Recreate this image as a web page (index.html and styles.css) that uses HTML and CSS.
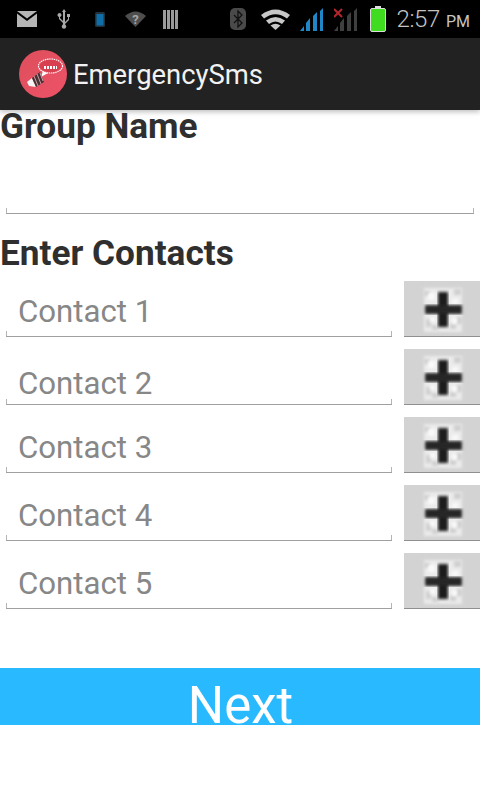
FILE: index.html
```html
<!DOCTYPE html>
<html lang="en">
<head>
    <meta charset="UTF-8">
    <meta name="viewport" content="width=device-width, initial-scale=1.0">
    <title>EmergencySms</title>
    <link rel="stylesheet" href="styles.css">
</head>
<body>
    <svg class="defs" width="0" height="0">
        <defs>
            <filter id="soft"><feGaussianBlur stdDeviation="1.500"/></filter>
            <symbol id="plus" viewBox="0 0 76 56">
                <rect x="20" y="7" width="38" height="44" fill="#ebebeb" filter="url(#soft)"/>
                <path d="M20 10h6v5h-6zM50 8h7v6h-7zM22 38h5v8h-5zM52 36h6v7h-6zM28 44h6v5h-6zM46 42h6v6h-6z" fill="#cfcfcf" filter="url(#soft)"/>
                <path d="M24 12h7v7h-7zM48 18h6v5h-6zM26 36h5v5h-5zM48 37h5v6h-5z" fill="#fafafa" filter="url(#soft)"/>
                <rect x="34" y="11" width="10" height="35" fill="#1a1a1a" filter="url(#soft)"/>
                <rect x="21" y="24" width="37" height="9" fill="#262626" filter="url(#soft)"/>
            </symbol>
        </defs>
    </svg>

    <div class="status-bar">
        <div class="status-left">
            <svg class="ic" width="20" height="16" viewBox="0 0 20 16"><path d="M0 0h20L10 7.500z" fill="#b5b5b5"/><path d="M0 2.500l10 7.500 10-7.500V16H0z" fill="#b5b5b5"/></svg>
            <svg class="ic ic-usb" width="14" height="20" viewBox="0 0 14 20"><path d="M7 0l2 3H8v10l3-3V8H10V5h3v3h-1v3l-4 4v2H6v-3L2 10V8a2 2 0 1 1 1 0v1l3 3V3H5z" fill="#a8a8a8"/><circle cx="7" cy="17.500" r="2.200" fill="#a8a8a8"/></svg>
            <svg class="ic ic-phone" width="10" height="15" viewBox="0 0 10 15"><rect width="10" height="15" rx="1.500" fill="#23303a"/><rect x="1.500" y="2" width="7" height="11.500" fill="#0f6ea8"/></svg>
            <svg class="ic ic-nowifi" width="21" height="16" viewBox="0 0 21 16"><path d="M0 5q10.500-9 21 0L10.500 16z" fill="#4e4e4e"/><text x="10.500" y="13" class="q">?</text></svg>
            <svg class="ic ic-sim" width="15" height="19" viewBox="0 0 15 19"><path d="M0 0h3v19H0zM4 0h3v19H4zM8 0h3v19H8zM12 0h3v19h-3z" fill="#9a9a9a"/></svg>
        </div>
        <div class="status-right">
            <svg class="ic" width="16" height="22" viewBox="0 0 16 22"><rect width="16" height="22" rx="5" fill="#4a4a4a"/><path d="M4 7l8 8-4 4V3l4 4-8 8" fill="none" stroke="#111" stroke-width="1.300"/></svg>
            <svg class="ic ic-wifi" width="29" height="21" viewBox="0 0 29 21"><path d="M0 6Q14.500-5 29 6l-3 3.500Q14.500 1 3 9.500z" fill="#c8c8c8"/><path d="M5 11.500q9.500-7 19 0L21 15q-6.500-5-13 0z" fill="#c8c8c8"/><path d="M9.500 16.500q5-3.500 10 0L14.500 21z" fill="#c8c8c8"/></svg>
            <svg class="ic ic-sig" width="24" height="23" viewBox="0 0 24 23"><path d="M0 23l4-5v5zM6 23v-8l4-5v13zM13 23V8l4-4v19zM20 23V3l3-3v23z" fill="#1f86c8"/></svg>
            <svg class="ic ic-sig" width="24" height="23" viewBox="0 0 24 23"><path d="M0 23l4-5v5zM6 23v-8l4-5v13zM13 23V8l4-4v19zM20 23V3l3-3v23z" fill="#3f3f3f"/><path d="M0 1l8 8M8 1L0 9" stroke="#b3262b" stroke-width="2"/></svg>
            <svg class="ic ic-batt" width="16" height="26" viewBox="0 0 16 26"><path d="M5 0h6v3H5z" fill="#ddd"/><rect x="0.500" y="2.500" width="15" height="23" rx="1.500" fill="#3fdc1f" stroke="#ddd"/></svg>
            <span class="clock">2:57<small>PM</small></span>
        </div>
    </div>

    <header class="app-bar">
        <svg class="logo" width="48" height="48" viewBox="0 0 48 48">
            <defs>
                <linearGradient id="red" x1="0" y1="0" x2="1" y2="1"><stop offset="0" stop-color="#dd4f5b"/><stop offset="1" stop-color="#ee5268"/></linearGradient>
            </defs>
            <circle cx="24" cy="24" r="24" fill="url(#red)"/>
            <path d="M24 21l-2 6 7-4z" fill="#fff"/>
            <ellipse cx="31.500" cy="16" rx="12" ry="7" fill="#d9404f" stroke="#fff" stroke-width="1.200" stroke-dasharray="1.500 0.700"/>
            <path d="M25 17.500h13" stroke="#fff" stroke-width="3" stroke-dasharray="2 1"/>
            <path d="M8 32l5-4 4 9-7-1z" fill="#f4f4f4"/>
            <path d="M13 28l8-6 4 10-8 5z" fill="#4a3035"/>
            <path d="M15 26l4 10M18 24l4 10M21 23l3 8" stroke="#c9a0a5" stroke-width="1"/>
        </svg>
        <span class="app-title">EmergencySms</span>
    </header>

    <main class="content">
        <h2 class="heading">Group Name</h2>
        <div class="field group-field"></div>

        <h2 class="heading contacts-heading">Enter Contacts</h2>
        <div class="contact-list">
            <div class="contact-row">
                <div class="field"><span class="hint">Contact 1</span></div>
                <button class="add-btn"><svg width="76" height="56"><use href="#plus"/></svg></button>
            </div>
            <div class="contact-row">
                <div class="field"><span class="hint hint-low">Contact 2</span></div>
                <button class="add-btn"><svg width="76" height="56"><use href="#plus"/></svg></button>
            </div>
            <div class="contact-row">
                <div class="field"><span class="hint">Contact 3</span></div>
                <button class="add-btn"><svg width="76" height="56"><use href="#plus"/></svg></button>
            </div>
            <div class="contact-row">
                <div class="field"><span class="hint">Contact 4</span></div>
                <button class="add-btn"><svg width="76" height="56"><use href="#plus"/></svg></button>
            </div>
            <div class="contact-row">
                <div class="field"><span class="hint">Contact 5</span></div>
                <button class="add-btn"><svg width="76" height="56"><use href="#plus"/></svg></button>
            </div>
        </div>

        <div class="next-btn"><span>Next</span></div>
    </main>
</body>
</html>
```

FILE: styles.css
```css
html, body {
    margin: 0;
    height: 800px;
    overflow: hidden;
    background: #fff;
    font-family: Roboto, sans-serif;
}

.defs {
    display: block;
    height: 0;
}

.ic {
    display: block;
}

/* Status bar */
.status-bar {
    height: 38px;
    background: #000;
    display: flex;
    justify-content: space-between;
    align-items: center;
    padding: 0 10px 0 17px;
}

.status-left {
    display: flex;
    align-items: center;
}

.ic-usb { margin-left: 20px; }
.ic-phone { margin-left: 24px; }
.ic-nowifi { margin-left: 20px; }
.ic-sim { margin-left: 17px; }

.status-right {
    display: flex;
    align-items: center;
}

.ic-wifi { margin-left: 15px; }
.ic-sig { margin-left: 10px; }
.ic-batt { margin-left: 12px; }

.q {
    font: bold 13px Roboto, sans-serif;
    fill: #a5a5a5;
    text-anchor: middle;
}

.clock {
    color: #c4c4c4;
    font-size: 24px;
    font-weight: 300;
    letter-spacing: -0.4px;
    margin-left: 11px;
}

.clock small {
    font-size: 16px;
    font-weight: 400;
    letter-spacing: 0;
    margin-left: 6px;
}

/* App bar */
.app-bar {
    height: 72px;
    background: #222;
    display: flex;
    align-items: center;
    padding-left: 19px;
    gap: 6px;
    box-shadow: 0 2px 5px rgba(0, 0, 0, 0.25);
    position: relative;
}

.app-title {
    color: #f2f2f2;
    font-size: 27.400px;
    padding-top: 2px;
}

/* Form */
.heading {
    margin: 0;
    font-size: 35.200px;
    line-height: 32px;
    font-weight: 700;
    color: #2f2f2f;
}

.field {
    border-bottom: 1px solid #a0a0a0;
    position: relative;
    box-sizing: border-box;
    flex: 1;
}

.field::before,
.field::after {
    content: "";
    position: absolute;
    bottom: 0;
    width: 1px;
    height: 5px;
    background: #b5b5b5;
}

.field::before { left: 0; }
.field::after { right: 0; }

.group-field {
    height: 52px;
    margin: 20px 6px 0;
}

.contacts-heading {
    margin-top: 23px;
}

.contact-list {
    margin-top: 12px;
    display: flex;
    flex-direction: column;
    gap: 12px;
}

.contact-row {
    display: flex;
    align-items: flex-end;
    gap: 12px;
    padding-left: 6px;
    height: 56px;
}

.contact-row .field {
    height: 56px;
    display: flex;
    align-items: center;
}

.hint {
    padding: 5px 0 0 12px;
    font-size: 31.200px;
    color: #878787;
}

.hint-low {
    padding-top: 13px;
}

.add-btn {
    width: 76px;
    height: 56px;
    padding: 0;
    border: 0;
    border-bottom: 1px solid #8f8f8f;
    background: #d3d3d3;
    display: block;
}

.add-btn svg {
    display: block;
}

.next-btn {
    margin-top: 59px;
    height: 57px;
    background: #29b9ff;
    color: #fff;
    font-size: 51px;
    text-align: center;
    overflow: hidden;
    line-height: 76px;
    padding-left: 1px;
}
```
